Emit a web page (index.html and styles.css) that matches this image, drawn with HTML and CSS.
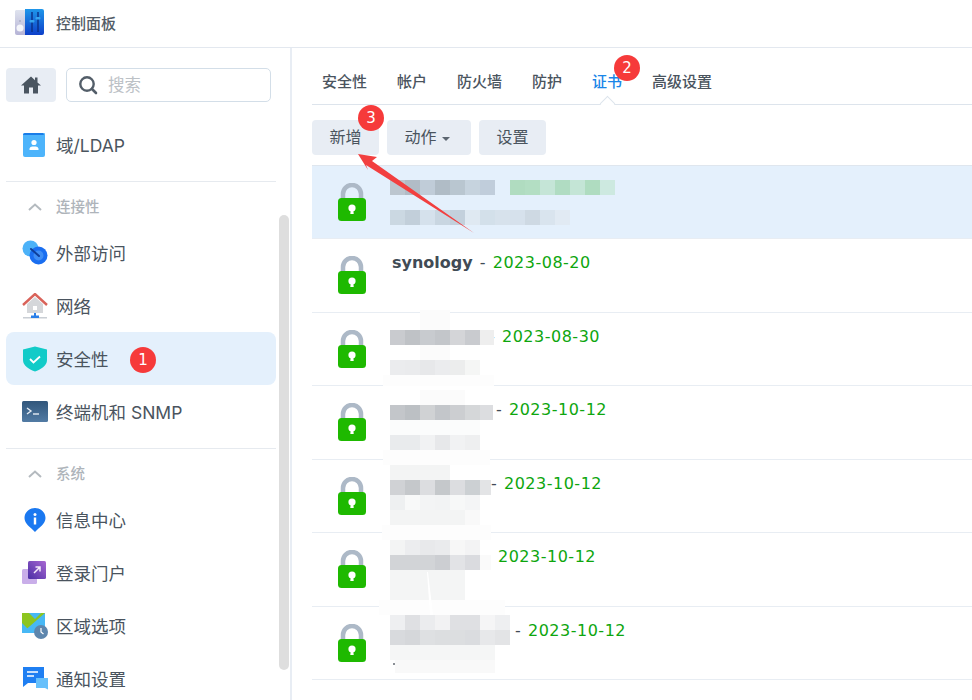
FILE: index.html
```html
<!DOCTYPE html>
<html lang="zh-CN">
<head>
<meta charset="utf-8">
<title>控制面板</title>
<link rel="stylesheet" href="styles.css">
</head>
<body>
<div class="app">
  <header class="titlebar">
    <svg class="applogo" width="30" height="28" viewBox="0 0 30 28">
      <defs>
        <linearGradient id="lg1" x1="0" y1="0" x2="0" y2="1"><stop offset="0" stop-color="#dfe3ee"/><stop offset="1" stop-color="#b5b3d6"/></linearGradient>
        <linearGradient id="lg2" x1="0" y1="0" x2="0" y2="1"><stop offset="0" stop-color="#1f97ea"/><stop offset="1" stop-color="#0d3fc9"/></linearGradient>
      </defs>
      <path d="M2 1h9v25H3a2 2 0 0 1-2-2V2z" fill="url(#lg1)"/>
      <circle cx="6" cy="19" r="3.5" fill="#f4f5fa"/><rect x="5.5" y="11" width="1" height="2" fill="#9aa0b8"/>
      <path d="M11 0h17a2 2 0 0 1 2 2v22a2 2 0 0 1-2 2H11z" fill="url(#lg2)"/>
      <path d="M18 3v20M24 3v20" stroke="#0b2f86" stroke-width="1.4"/>
      <rect x="15.5" y="11" width="5" height="2.5" rx="1" fill="#37a4ee"/><rect x="21.5" y="8" width="5" height="2.5" rx="1" fill="#37a4ee"/>
    </svg>
    <span class="apptitle">控制面板</span>
  </header>
  <div class="columns">
    <aside class="sidebar">
      <div class="searchrow">
        <button class="homebtn" type="button">
          <svg width="20" height="18" viewBox="0 0 20 18"><path d="M10 0.5 0 9.5h3V17.500h5V11.500h4V17.500h5V9.500h3L16.500 6.400V1.500h-2.500v2.700z" fill="#4a5560"/></svg>
        </button>
        <div class="search">
          <svg width="20" height="20" viewBox="0 0 20 20"><circle cx="9" cy="9" r="6.700" fill="none" stroke="#535e69" stroke-width="2.400"/><path d="M14 14l4 4" stroke="#535e69" stroke-width="2.600" stroke-linecap="round"/></svg>
          <span class="placeholder">搜索</span>
        </div>
      </div>

      <div class="item">
        <svg class="icon" viewBox="0 0 26 26"><path d="M1 3a2 2 0 0 1 2-2h19a1 1 0 0 1 1 1v21a2 2 0 0 1-2 2H3a2 2 0 0 1-2-2z" fill="#4db4fb"/><path d="M1 3a2 2 0 0 1 2-2h18l1 2z" fill="#1a7de8"/><circle cx="12" cy="10.500" r="2.600" fill="#fff"/><path d="M7.500 18v-1.500a3 3 0 0 1 3-2h3a3 3 0 0 1 3 2V18z" fill="#fff"/></svg>
        <span>域/LDAP</span>
      </div>
      <hr class="divider">
      <div class="group">
        <svg width="14" height="8" viewBox="0 0 14 8"><path d="M1 7l6-5.500L13 7" fill="none" stroke="#b4babf" stroke-width="2"/></svg>
        <span>连接性</span>
      </div>
      <div class="item">
        <svg class="icon" viewBox="0 0 26 26"><circle cx="8.500" cy="8.500" r="8" fill="#4cb2f8"/><circle cx="16.500" cy="15.500" r="9" fill="#1a6ef0"/><circle cx="16.500" cy="15.500" r="5" fill="#3f8ef5"/><path d="M9 9l8 7" stroke="#0f3f9a" stroke-width="2" stroke-linecap="round"/></svg>
        <span>外部访问</span>
      </div>
      <div class="item">
        <svg class="icon" viewBox="0 0 26 26"><path d="M1 12 13 1l12 11" fill="none" stroke="#d9635a" stroke-width="2.400"/><path d="M5 11 13 4l8 7v9H5z" fill="#d5d7da"/><rect x="11" y="13" width="4" height="4" fill="#fff"/><rect x="1" y="24" width="24" height="1.500" fill="#c9ced4"/><path d="M13 20v4" stroke="#2a7fe8" stroke-width="2"/><rect x="9" y="22.500" width="8" height="2.500" fill="#2a7fe8"/></svg>
        <span>网络</span>
      </div>
      <div class="item active">
        <svg class="icon" viewBox="0 0 26 26"><path d="M13 0.500l12 3v10.500c0 6-6.500 9.500-12 11.500C7.500 23.500 1 20 1 14V3.500z" fill="#12cbc8"/><path d="M8 13l3.500 3.500L18 10.500" fill="none" stroke="#fff" stroke-width="1.800"/></svg>
        <span>安全性</span>
        <span class="badge badge-item">1</span>
      </div>
      <div class="item">
        <svg class="icon" viewBox="0 0 26 26"><defs><linearGradient id="tg" x1="0" y1="0" x2="0" y2="1"><stop offset="0" stop-color="#31567b"/><stop offset="1" stop-color="#527ba4"/></linearGradient></defs><rect x="0" y="2" width="26" height="21" rx="1.500" fill="url(#tg)"/><path d="M5 9l4 3-4 3" fill="none" stroke="#e6edf4" stroke-width="1.400"/><path d="M11 15h6" stroke="#e6edf4" stroke-width="1.400"/></svg>
        <span>终端机和 SNMP</span>
      </div>
      <hr class="divider">
      <div class="group">
        <svg width="14" height="8" viewBox="0 0 14 8"><path d="M1 7l6-5.500L13 7" fill="none" stroke="#b4babf" stroke-width="2"/></svg>
        <span>系统</span>
      </div>
      <div class="item">
        <svg class="icon" viewBox="0 0 26 26"><path d="M13 1c6 0 10.500 4.500 10.500 10 0 6-6 9-10.500 14C8.500 20 2.500 17 2.500 11 2.500 5.500 7 1 13 1z" fill="#1a78f0"/><circle cx="13" cy="7.500" r="1.500" fill="#fff"/><rect x="11.800" y="10.500" width="2.400" height="7" fill="#fff"/></svg>
        <span>信息中心</span>
      </div>
      <div class="item">
        <svg class="icon" viewBox="0 0 26 26"><defs><linearGradient id="pg" x1="1" y1="0" x2="0" y2="1"><stop offset="0" stop-color="#a867d2"/><stop offset="1" stop-color="#4a2ea5"/></linearGradient></defs><rect x="0" y="9" width="15" height="15" rx="1.500" fill="#c9aee9"/><rect x="6" y="1" width="18" height="18" rx="1.500" fill="url(#pg)"/><path d="M12 13l6-6M13.500 7H18v4.500" fill="none" stroke="#f3eafa" stroke-width="1.500"/></svg>
        <span>登录门户</span>
      </div>
      <div class="item">
        <svg class="icon" viewBox="0 0 26 26"><rect x="0" y="0" width="23" height="20" fill="#47b8f5"/><path d="M0 0h7l6 6 6-6h4L0 20z" fill="#8dc51f"/><path d="M0 10 10 20H0z" fill="#47b8f5"/><circle cx="19" cy="19" r="7" fill="#5d86ad"/><path d="M19 15v4l2.500 2" fill="none" stroke="#fff" stroke-width="1.200"/></svg>
        <span>区域选项</span>
      </div>
      <div class="item">
        <svg class="icon" viewBox="0 0 26 26"><path d="M1 1h21v16H6l-5 4z" fill="#1f7ff2"/><path d="M5 6h11M5 10h7" stroke="#fff" stroke-width="1.500"/><path d="M14 12h12v10l1 2-4-2h-9z" fill="#67c0fb"/></svg>
        <span>通知设置</span>
      </div>
      <div class="scrollthumb"></div>
    </aside>

    <main class="main">
      <nav class="tabs">
        <span>安全性</span><span>帐户</span><span>防火墙</span><span>防护</span>
        <span class="tab-current">证书<span class="badge badge-tab">2</span></span>
        <span>高级设置</span>
      </nav>
      <div class="toolbar">
        <button class="btn btn-new" type="button">新增<span class="badge badge-btn">3</span></button>
        <button class="btn btn-action" type="button">动作<i class="caret"></i></button>
        <button class="btn btn-set" type="button">设置</button>
      </div>
      <div class="list">
        <div class="row selected"><svg class="lock" viewBox="0 0 28 38"><use href="#lockshape"/></svg></div>
        <div class="row"><svg class="lock" viewBox="0 0 28 38"><use href="#lockshape"/></svg>
          <div class="cert"><b>synology</b><span class="dash">-</span><span class="date">2023-08-20</span></div></div>
        <div class="row"><svg class="lock" viewBox="0 0 28 38"><use href="#lockshape"/></svg>
          <div class="cert"><span class="name n90"></span><span class="dash">-</span><span class="date">2023-08-30</span></div></div>
        <div class="row"><svg class="lock" viewBox="0 0 28 38"><use href="#lockshape"/></svg>
          <div class="cert"><span class="name n97"></span><span class="dash">-</span><span class="date">2023-10-12</span></div></div>
        <div class="row"><svg class="lock" viewBox="0 0 28 38"><use href="#lockshape"/></svg>
          <div class="cert"><span class="name n92"></span><span class="dash">-</span><span class="date">2023-10-12</span></div></div>
        <div class="row"><svg class="lock" viewBox="0 0 28 38"><use href="#lockshape"/></svg>
          <div class="cert"><span class="name n86"></span><span class="dash">-</span><span class="date">2023-10-12</span></div></div>
        <div class="row"><svg class="lock" viewBox="0 0 28 38"><use href="#lockshape"/></svg>
          <div class="cert"><span class="name n116"></span><span class="dash">-</span><span class="date">2023-10-12</span></div></div>
      </div>
    </main>
  </div>

  <svg class="defs" width="0" height="0">
    <g id="lockshape">
      <path d="M5 18V11a9 9 0 0 1 18 0v7" fill="none" stroke="#adb9c7" stroke-width="4.500"/>
      <rect x="0" y="15" width="28" height="23" rx="3.500" fill="#1eb900"/>
      <circle cx="14" cy="25" r="3.600" fill="#fff"/><path d="M12.800 26h2.400l.5 5h-3.400z" fill="#fff"/>
    </g>
  </svg>

  <svg class="overlay" width="972" height="700" viewBox="0 0 972 700">
    <g shape-rendering="crispEdges">
      <!-- row 1 -->
      <rect x="390" y="180" width="15" height="15" fill="#bcc6cf"/><rect x="405" y="180" width="15" height="15" fill="#b1bcc6"/><rect x="420" y="180" width="15" height="15" fill="#c0ccd8"/><rect x="435" y="180" width="15" height="15" fill="#b0bcc6"/><rect x="450" y="180" width="15" height="15" fill="#b9c6d0"/><rect x="465" y="180" width="15" height="15" fill="#c6d3de"/><rect x="480" y="180" width="15" height="15" fill="#c0cddb"/>
      <rect x="510" y="180" width="15" height="15" fill="#b0dcc0"/><rect x="525" y="180" width="15" height="15" fill="#b3dec3"/><rect x="540" y="180" width="15" height="15" fill="#c5e5d7"/><rect x="555" y="180" width="15" height="15" fill="#b0dcc2"/><rect x="570" y="180" width="15" height="15" fill="#c4e5d6"/><rect x="585" y="180" width="15" height="15" fill="#afdcc0"/><rect x="600" y="180" width="15" height="15" fill="#cde9e0"/>
      <rect x="390" y="210" width="15" height="15" fill="#cbd8e2"/><rect x="405" y="210" width="15" height="15" fill="#c2cfda"/><rect x="420" y="210" width="15" height="15" fill="#d5e1ec"/><rect x="435" y="210" width="15" height="15" fill="#c9d6e1"/><rect x="450" y="210" width="15" height="15" fill="#c3d0dc"/><rect x="465" y="210" width="15" height="15" fill="#dfe9f2"/><rect x="480" y="210" width="15" height="15" fill="#d3e0ea"/><rect x="495" y="210" width="15" height="15" fill="#d7e2ec"/><rect x="510" y="210" width="15" height="15" fill="#d6e1ec"/><rect x="525" y="210" width="15" height="15" fill="#ced9e3"/><rect x="540" y="210" width="15" height="15" fill="#d9e4ee"/><rect x="555" y="210" width="15" height="15" fill="#e1eaf3"/>
      <!-- row 3 -->
      <rect x="420" y="310" width="30" height="20" fill="#fbfbfb"/><rect x="420" y="345" width="30" height="15" fill="#fbfbfb"/><rect x="383" y="375" width="111" height="11" fill="#fdfdfd"/>
      <rect x="390" y="330" width="15" height="15" fill="#c9cbcf"/><rect x="405" y="330" width="15" height="15" fill="#bfc2c6"/><rect x="420" y="330" width="15" height="15" fill="#c8cbcf"/><rect x="435" y="330" width="15" height="15" fill="#c3c6ca"/><rect x="450" y="330" width="15" height="15" fill="#d4d5d8"/><rect x="465" y="330" width="15" height="15" fill="#c9cbcf"/><rect x="480" y="330" width="14" height="15" fill="#eeeeee"/>
      <rect x="390" y="360" width="15" height="15" fill="#ebecee"/><rect x="405" y="360" width="15" height="15" fill="#eaebed"/><rect x="420" y="360" width="15" height="15" fill="#e7e8ea"/><rect x="435" y="360" width="15" height="15" fill="#ebecee"/><rect x="450" y="360" width="15" height="15" fill="#eceded"/><rect x="465" y="360" width="15" height="15" fill="#f5f6f5"/>
      <!-- row 4 -->
      <rect x="420" y="390" width="45" height="15" fill="#fbfbfb"/><rect x="390" y="420" width="90" height="15" fill="#fbfcfc"/>
      <rect x="390" y="405" width="15" height="15" fill="#c3c6ca"/><rect x="405" y="405" width="15" height="15" fill="#bcc0c4"/><rect x="420" y="405" width="15" height="15" fill="#d0d2d4"/><rect x="435" y="405" width="15" height="15" fill="#c3c6ca"/><rect x="450" y="405" width="15" height="15" fill="#ccced1"/><rect x="465" y="405" width="15" height="15" fill="#d5d7d9"/><rect x="480" y="405" width="13" height="15" fill="#dcdde0"/>
      <rect x="390" y="435" width="15" height="15" fill="#e9ebed"/><rect x="405" y="435" width="15" height="15" fill="#e9ebed"/><rect x="420" y="435" width="15" height="15" fill="#f1f2f3"/><rect x="435" y="435" width="15" height="15" fill="#e7e8ea"/><rect x="450" y="435" width="15" height="15" fill="#f1f2f3"/><rect x="465" y="435" width="15" height="15" fill="#eeeff0"/>
      <rect x="383" y="450" width="107" height="15" fill="#fdfdfd"/>
      <!-- row 5 -->
      <rect x="390" y="465" width="60" height="15" fill="#f3f4f4"/>
      <rect x="390" y="480" width="15" height="15" fill="#d0d2d5"/><rect x="405" y="480" width="15" height="15" fill="#c5c8cb"/><rect x="420" y="480" width="15" height="15" fill="#dcdde0"/><rect x="435" y="480" width="15" height="15" fill="#c5c8cb"/><rect x="450" y="480" width="15" height="15" fill="#dcdde0"/><rect x="465" y="480" width="15" height="15" fill="#ccd0d3"/><rect x="480" y="480" width="11" height="15" fill="#e3e4e6"/>
      <rect x="390" y="495" width="15" height="15" fill="#eef0f1"/><rect x="405" y="495" width="15" height="15" fill="#f8f9f9"/><rect x="420" y="495" width="15" height="15" fill="#f3f4f5"/><rect x="435" y="495" width="15" height="15" fill="#f2f3f4"/><rect x="450" y="495" width="15" height="15" fill="#f7f8f8"/><rect x="465" y="495" width="15" height="15" fill="#f4f5f6"/>
      <rect x="390" y="510" width="75" height="15" fill="#f3f4f4"/><rect x="465" y="510" width="15" height="15" fill="#f9f9f9"/>
      <rect x="382" y="525" width="109" height="15" fill="#fdfdfd"/>
      <!-- row 6 -->
      <rect x="390" y="540" width="15" height="15" fill="#f3f4f4"/><rect x="405" y="540" width="15" height="15" fill="#ecedef"/><rect x="420" y="540" width="15" height="15" fill="#e8e9eb"/><rect x="435" y="540" width="15" height="15" fill="#eaebed"/><rect x="450" y="540" width="15" height="15" fill="#f7f7f7"/><rect x="465" y="540" width="15" height="15" fill="#f3f3f4"/>
      <rect x="390" y="555" width="15" height="15" fill="#d2d4d7"/><rect x="405" y="555" width="15" height="15" fill="#d2d4d7"/><rect x="420" y="555" width="15" height="15" fill="#d2d4d7"/><rect x="435" y="555" width="15" height="15" fill="#ccced2"/><rect x="450" y="555" width="15" height="15" fill="#e2e3e6"/><rect x="465" y="555" width="15" height="15" fill="#dadbdf"/><rect x="480" y="555" width="11" height="15" fill="#fafafa"/>
      <rect x="390" y="570" width="75" height="30" fill="#f4f5f5"/>
      <rect x="379" y="600" width="126" height="15" fill="#fdfdfd"/>
      <!-- row 7 -->
      <rect x="390" y="615" width="15" height="15" fill="#eeeff1"/><rect x="405" y="615" width="15" height="15" fill="#dfe0e3"/><rect x="420" y="615" width="15" height="15" fill="#ebecee"/><rect x="435" y="615" width="15" height="15" fill="#f2f2f3"/><rect x="450" y="615" width="15" height="15" fill="#dfe0e3"/><rect x="465" y="615" width="15" height="15" fill="#dfe0e3"/><rect x="480" y="615" width="15" height="15" fill="#f5f5f6"/><rect x="495" y="615" width="15" height="15" fill="#eeeff1"/>
      <rect x="390" y="630" width="15" height="15" fill="#d8dadd"/><rect x="405" y="630" width="15" height="15" fill="#d5d7da"/><rect x="420" y="630" width="15" height="15" fill="#dee0e2"/><rect x="435" y="630" width="15" height="15" fill="#dcdee0"/><rect x="450" y="630" width="15" height="15" fill="#dcdee0"/><rect x="465" y="630" width="15" height="15" fill="#dadcdf"/><rect x="480" y="630" width="15" height="15" fill="#e7e8ea"/><rect x="495" y="630" width="15" height="15" fill="#e3e4e6"/>
      <rect x="390" y="645" width="105" height="15" fill="#f5f6f6"/><rect x="395" y="660" width="100" height="13" fill="#f9f9f9"/>
      <rect x="393" y="663" width="2" height="2" fill="#8a8f95"/>
    </g>
    <path d="M427 572l3 43 3 0-5-43z" fill="#ffffff"/>
    <polygon points="358,154 377,157 372,161 474,233 366,165 368,170" fill="#f23f3f"/>
  </svg>
</div>
</body>
</html>
```
FILE: styles.css
```css
* { box-sizing: border-box; }
html, body { margin: 0; padding: 0; }
body {
  width: 972px;
  height: 700px;
  overflow: hidden;
  background: #fff;
  color: #414b55;
  font-family: Inter, "Noto Sans CJK SC", sans-serif;
}
.app { position: relative; width: 972px; height: 700px; overflow: hidden; }

.titlebar {
  height: 48px;
  display: flex;
  align-items: center;
  gap: 12px;
  padding-left: 14px;
  border-bottom: 1px solid #e3e8ef;
}
.applogo { flex: none; margin-top: -1px; }
.apptitle { font-size: 15px; font-weight: 500; color: #525c66; margin-top: -2px; }

.columns { display: flex; height: 652px; }

.sidebar {
  position: relative;
  flex: none;
  width: 292px;
  height: 652px;
  overflow: hidden;
  padding: 20px 15px 0 6px;
  border-right: 2px solid #e8edf4;
}
.searchrow { display: flex; gap: 10px; height: 34px; margin-bottom: 16px; width: 265px; }
.homebtn {
  flex: none;
  width: 50px;
  height: 34px;
  border: 0;
  border-radius: 4px;
  background: #e8edf4;
  display: flex;
  align-items: center;
  justify-content: center;
  padding: 0;
}
.search {
  flex: 1;
  display: flex;
  align-items: center;
  gap: 10px;
  padding-left: 11px;
  border: 1px solid #d3dee8;
  border-radius: 5px;
}
.placeholder { font-size: 16.5px; color: #bcc1c6; margin-top: -2px; }

.item {
  position: relative;
  display: flex;
  align-items: center;
  gap: 8px;
  width: 270px;
  height: 53px;
  padding-left: 16px;
  border-radius: 8px;
  font-size: 17.5px;
  color: #4a545e;
  white-space: nowrap;
}
.item > span { margin-top: -1px; }
.item.active { background: #e4f0fc; }
.icon { flex: none; width: 26px; height: 26px; }
.divider {
  width: 270px;
  height: 1px;
  margin: 10px 0 0;
  border: 0;
  background: #e6eaef;
}
.item + .divider { margin-top: 10px; }
.group {
  display: flex;
  align-items: center;
  gap: 14px;
  height: 26px;
  margin: 12px 0 6px;
  padding-left: 22px;
  font-size: 14.5px;
  font-weight: 500;
  color: #aeb4ba;
}
.group > span { margin-top: -3px; }
.scrollthumb {
  position: absolute;
  left: 279px;
  top: 167px;
  width: 10px;
  height: 455px;
  border-radius: 5px;
  background: #dedede;
}

.badge {
  position: absolute;
  width: 26px;
  height: 26px;
  border-radius: 50%;
  background: #f63a3a;
  color: #fff;
  font-size: 15px;
  font-weight: 400;
  line-height: 26px;
  text-align: center;
  font-family: "DejaVu Sans", sans-serif;
}
.item > .badge-item { left: 124px; top: 15px; margin-top: 0; }
.badge-tab { left: 22px; top: -15px; }
.badge-btn { left: 46px; top: -15px; }

.main { flex: 1; min-width: 0; padding-left: 20px; }
.tabs {
  display: flex;
  align-items: center;
  gap: 30px;
  height: 57px;
  padding: 8px 0 0 10px;
  border-bottom: 1px solid #dde4ec;
  font-size: 15px;
  font-weight: 500;
  color: #4a545e;
}
.tab-current { position: relative; color: #1a86e8; }
.tab-current::after {
  content: "";
  position: absolute;
  left: 10px;
  bottom: -18px;
  width: 10px;
  height: 10px;
  background: #fff;
  border-top: 1px solid #dde4ec;
  border-left: 1px solid #dde4ec;
  transform: rotate(45deg);
}
.toolbar { display: flex; gap: 8px; margin-top: 15px; }
.btn {
  position: relative;
  height: 35px;
  padding: 0 0 3px;
  border: 0;
  border-radius: 4px;
  background: #e8edf4;
  color: #4a545e;
  font: inherit;
  font-size: 16px;
}
.btn-new { width: 67px; }
.btn-action { width: 84px; padding-right: 4px; }
.btn-set { width: 67px; }
.caret {
  display: inline-block;
  margin-left: 5px;
  vertical-align: middle;
  border-left: 4.5px solid transparent;
  border-right: 4.5px solid transparent;
  border-top: 4px solid #5c6670;
}

.list { margin-top: 9.5px; border-top: 1px solid #dfe6ee; }
.row {
  display: flex;
  align-items: flex-start;
  gap: 26px;
  height: 73.5px;
  padding-left: 26px;
  border-bottom: 1px solid #e8edf3;
}
.row.selected { background: #e4f0fc; }
.lock { flex: none; width: 28px; height: 38px; margin-top: 17px; }
.cert {
  display: flex;
  align-items: center;
  height: 20px;
  margin-top: 14px;
  font-family: "DejaVu Sans", sans-serif;
  font-size: 16px;
  line-height: 20px;
  white-space: nowrap;
}
.cert b { font-weight: 700; color: #414b55; font-size: 16px; }
.dash { margin: 0 7px; color: #414b55; width: 6px; }
.date { color: #0ea60e; letter-spacing: 0.5px; }
.name { display: block; flex: none; }
.n90 { width: 90px; }
.n97 { width: 97px; }
.n92 { width: 92px; }
.n86 { width: 86px; }
.n116 { width: 116px; }

.defs { position: absolute; }
.overlay { position: absolute; left: 0; top: 0; pointer-events: none; }
```
